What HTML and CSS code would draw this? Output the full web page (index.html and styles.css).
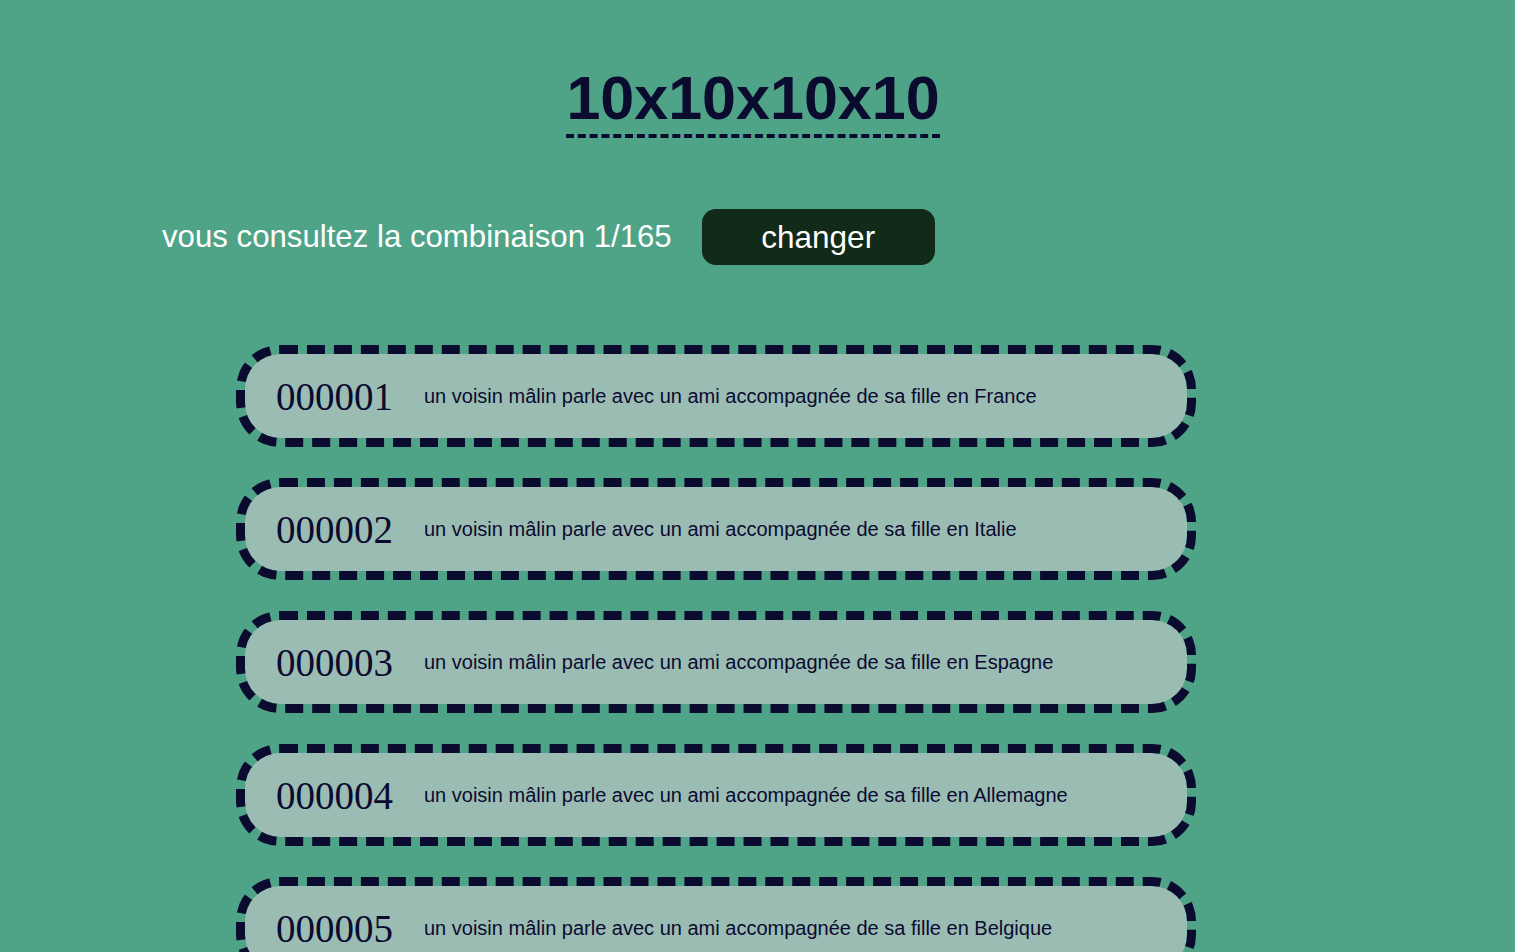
FILE: index.html
```html
<!DOCTYPE html>
<html lang="fr">
<head>
<meta charset="utf-8">
<title>10x10x10x10</title>
<link rel="stylesheet" href="styles.css">
</head>
<body>
<header class="header">
  <h1 class="title">10x10x10x10</h1>
</header>
<section class="controls">
  <span class="status">vous consultez la combinaison 1/165</span>
  <button class="btn">changer</button>
</section>
<main class="list">
  <div class="card"><span class="num">000001</span><span class="phrase">un voisin mâlin parle avec un ami accompagnée de sa fille en France</span></div>
  <div class="card"><span class="num">000002</span><span class="phrase">un voisin mâlin parle avec un ami accompagnée de sa fille en Italie</span></div>
  <div class="card"><span class="num">000003</span><span class="phrase">un voisin mâlin parle avec un ami accompagnée de sa fille en Espagne</span></div>
  <div class="card"><span class="num">000004</span><span class="phrase">un voisin mâlin parle avec un ami accompagnée de sa fille en Allemagne</span></div>
  <div class="card"><span class="num">000005</span><span class="phrase">un voisin mâlin parle avec un ami accompagnée de sa fille en Belgique</span></div>
</main>
</body>
</html>
```

FILE: styles.css
```css
html, body {
  margin: 0;
  padding: 0;
}
body {
  background: #4fa387;
  font-family: "Liberation Sans", Arial, sans-serif;
  color: #0b0b30;
}
.header {
  display: flex;
  justify-content: center;
  padding-top: 63px;
  padding-right: 9px;
}
.title {
  margin: 0;
  font-size: 61px;
  font-weight: 700;
  line-height: 71px;
  color: #0b0b30;
  border-bottom: 4px dashed #0b0b30;
}
.controls {
  display: flex;
  align-items: center;
  gap: 30px;
  padding-left: 162px;
  margin-top: 71px;
}
.status {
  color: #ffffff;
  font-size: 31.2px;
}
.btn {
  width: 233px;
  height: 56px;
  border: none;
  border-radius: 14px;
  background: #122a18;
  color: #ffffff;
  font-family: "Liberation Sans", Arial, sans-serif;
  font-size: 31.5px;
  padding: 0;
}
.list {
  display: flex;
  flex-direction: column;
  gap: 31px;
  padding-left: 236px;
  margin-top: 80px;
}
.card {
  box-sizing: border-box;
  width: 960px;
  height: 102px;
  border: 9px dashed #0b0b30;
  border-radius: 44px;
  background: #9bbcb3;
  background-clip: padding-box;
  display: flex;
  align-items: center;
  padding-left: 31px;
}
.num {
  font-family: "Liberation Serif", "Times New Roman", serif;
  font-size: 39px;
  width: 148px;
  flex-shrink: 0;
}
.phrase {
  font-size: 20px;
}
```
